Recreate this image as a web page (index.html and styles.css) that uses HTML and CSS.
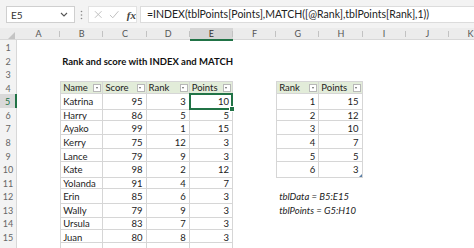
FILE: index.html
```html
<!DOCTYPE html>
<html lang="en">
<head>
  <meta charset="UTF-8" />
  <meta name="viewport" content="width=device-width, initial-scale=1.0"/>
  <title>Rank and score with INDEX and MATCH</title>
  <link rel="stylesheet" href="styles.css">
</head>
<body>
  <div class="toolbar">
    <div class="namebox">
      <span>E5</span>
      <svg width="8" height="5" viewBox="0 0 8 5"><path d="M1 1l3 3 3-3" fill="none" stroke="#555" stroke-width="1.1"/></svg>
    </div>
    <div class="grip">
      <svg width="3" height="10" viewBox="0 0 3 10"><circle cx="1.5" cy="1.5" r="0.8" fill="#888"/><circle cx="1.5" cy="5" r="0.8" fill="#888"/><circle cx="1.5" cy="8.5" r="0.8" fill="#888"/></svg>
    </div>
    <div class="fxgroup">
      <svg width="9" height="9" viewBox="0 0 9 9"><path d="M1 1l7 7M8 1l-7 7" stroke="#bdbdbd" stroke-width="1"/></svg>
      <svg width="11" height="9" viewBox="0 0 11 9"><path d="M1 5l3 3 6-7" fill="none" stroke="#bdbdbd" stroke-width="1"/></svg>
      <span class="fx">fx</span>
    </div>
    <div class="formula">=INDEX(tblPoints[Points],MATCH([@Rank],tblPoints[Rank],1))</div>
  </div>

  <div class="sheet">
    <div class="row colhead">
      <div class="corner"><svg width="7" height="7" viewBox="0 0 7 7"><path d="M7 0v7H0z" fill="#c4c4c4"/></svg></div>
      <div class="ch">A</div><div class="ch">B</div><div class="ch">C</div><div class="ch">D</div>
      <div class="ch active">E</div><div class="ch">F</div><div class="ch">G</div><div class="ch">H</div>
      <div class="ch">I</div><div class="ch">J</div><div class="ch">K</div>
    </div>

    <div class="row"><div class="rh">1</div></div>
    <div class="row"><div class="rh">2</div><div class="title">Rank and score with INDEX and MATCH</div></div>
    <div class="row"><div class="rh">3</div></div>
    <div class="row">
      <div class="rh">4</div>
      <div class="c hd first colb">Name<span class="fb"></span></div>
      <div class="c hd">Score<span class="fb"></span></div>
      <div class="c hd">Rank<span class="fb"></span></div>
      <div class="c hd">Points<span class="fb"></span></div>
      <div class="c hd first colg">Rank<span class="fb"></span></div>
      <div class="c hd">Points<span class="fb"></span></div>
    </div>
    <div class="row">
      <div class="rh on">5</div>
      <div class="c first colb">Katrina</div><div class="c n">95</div><div class="c n">3</div><div class="c n sel">10</div>
      <div class="c n first colg">1</div><div class="c n">15</div>
    </div>
    <div class="row">
      <div class="rh">6</div>
      <div class="c first colb">Harry</div><div class="c n">86</div><div class="c n">5</div><div class="c n">5</div>
      <div class="c n first colg">2</div><div class="c n">12</div>
    </div>
    <div class="row">
      <div class="rh">7</div>
      <div class="c first colb">Ayako</div><div class="c n">99</div><div class="c n">1</div><div class="c n">15</div>
      <div class="c n first colg">3</div><div class="c n">10</div>
    </div>
    <div class="row">
      <div class="rh">8</div>
      <div class="c first colb">Kerry</div><div class="c n">75</div><div class="c n">12</div><div class="c n">3</div>
      <div class="c n first colg">4</div><div class="c n">7</div>
    </div>
    <div class="row">
      <div class="rh">9</div>
      <div class="c first colb">Lance</div><div class="c n">79</div><div class="c n">9</div><div class="c n">3</div>
      <div class="c n first colg">5</div><div class="c n">5</div>
    </div>
    <div class="row">
      <div class="rh">10</div>
      <div class="c first colb">Kate</div><div class="c n">98</div><div class="c n">2</div><div class="c n">12</div>
      <div class="c n first colg">6</div><div class="c n resize">3</div>
    </div>
    <div class="row">
      <div class="rh">11</div>
      <div class="c first colb">Yolanda</div><div class="c n">91</div><div class="c n">4</div><div class="c n">7</div>
    </div>
    <div class="row">
      <div class="rh">12</div>
      <div class="c first colb">Erin</div><div class="c n">85</div><div class="c n">6</div><div class="c n">3</div>
      <div class="note">tblData = B5:E15</div>
    </div>
    <div class="row">
      <div class="rh">13</div>
      <div class="c first colb">Wally</div><div class="c n">79</div><div class="c n">9</div><div class="c n">3</div>
      <div class="note">tblPoints = G5:H10</div>
    </div>
    <div class="row">
      <div class="rh">14</div>
      <div class="c first colb">Ursula</div><div class="c n">83</div><div class="c n">7</div><div class="c n">3</div>
    </div>
    <div class="row">
      <div class="rh">15</div>
      <div class="c first colb">Juan</div><div class="c n">80</div><div class="c n">8</div><div class="c n">3</div>
    </div>
    <div class="row">
      <div class="rh"></div>
      <div class="c first colb"></div><div class="c"></div><div class="c"></div><div class="c"></div>
    </div>
  </div>
</body>
</html>
```

FILE: styles.css
```css
body {
  margin: 0;
  font-family: Lato, "Liberation Sans", sans-serif;
  color: #222;
  background-color: #fff;
  overflow: hidden;
}
.toolbar {
  height: 28px;
  background-color: #f3f3f3;
  display: flex;
  align-items: flex-start;
  padding: 6px 0 0 6px;
  box-sizing: border-box;
}
.namebox {
  width: 69px;
  height: 17px;
  box-sizing: border-box;
  background-color: #fff;
  border: 1px solid #cfcfcf;
  display: flex;
  align-items: center;
  justify-content: space-between;
  padding: 0 6px 0 4px;
  font-size: 10px;
  color: #333;
}
.grip {
  width: 13px;
  height: 17px;
  display: flex;
  align-items: center;
  justify-content: center;
}
.fxgroup {
  width: 49px;
  height: 17px;
  box-sizing: border-box;
  background-color: #fff;
  border: 1px solid #e2e2e2;
  display: flex;
  align-items: center;
  gap: 7px;
  padding-left: 5px;
}
.fx {
  font-family: "Liberation Serif", serif;
  font-style: italic;
  font-weight: bold;
  font-size: 11px;
  color: #444;
}
.formula {
  flex: 1;
  margin-left: 3px;
  height: 17px;
  box-sizing: border-box;
  background-color: #fff;
  border: 1px solid #dcdcdc;
  border-right: none;
  padding-left: 6px;
  font-size: 10.5px;
  line-height: 15px;
  color: #222;
  white-space: nowrap;
}
.row {
  display: grid;
  grid-template-columns: 17px repeat(11, 43.2px);
  height: 13.57px;
  font-size: 9.5px;
}
.colhead {
  height: 12px;
  background-color: #ececec;
  border-bottom: 1px solid #d8d8d8;
  box-sizing: border-box;
}
.corner {
  display: flex;
  align-items: flex-end;
  justify-content: flex-end;
  padding: 0 2px 2px 0;
}
.ch {
  position: relative;
  text-align: center;
  font-size: 9px;
  line-height: 11px;
  color: #555;
}
.ch::after {
  content: "";
  position: absolute;
  right: 0;
  top: 3px;
  height: 6px;
  border-right: 1px solid #c2c2c2;
}
.ch.active {
  background-color: #d6d6d6;
  color: #333;
  border-bottom: 2px solid #217346;
}
.rh {
  background-color: #f3f3f3;
  border-right: 1px solid #d8d8d8;
  text-align: center;
  line-height: 15px;
  font-size: 9px;
  color: #666;
  overflow: hidden;
}
.rh.on {
  background-color: #d9d9d9;
  color: #217346;
  border-right: 2px solid #217346;
}
.title {
  grid-column: 3 / span 5;
  padding-left: 2px;
  font-weight: bold;
  font-size: 9.5px;
  line-height: 15px;
  white-space: nowrap;
  color: #111;
}
.note {
  grid-column: 8 / span 3;
  padding-left: 3px;
  font-style: italic;
  line-height: 15px;
  white-space: nowrap;
}
.c {
  box-sizing: border-box;
  border-right: 1px solid #d6d6d6;
  border-bottom: 1px solid #d6d6d6;
  padding: 0 2px;
  line-height: 15px;
  white-space: nowrap;
  overflow: hidden;
}
.c.first {
  border-left: 1px solid #d6d6d6;
}
.colb {
  grid-column: 3;
}
.colg {
  grid-column: 8;
}
.n {
  text-align: right;
  padding-right: 3px;
}
.hd {
  background-color: #e2ecd9;
  border-top: 1px solid #d6d6d6;
  display: flex;
  align-items: center;
  justify-content: space-between;
  padding-top: 1px;
  padding-right: 1px;
}
.fb {
  width: 8px;
  height: 8px;
  box-sizing: border-box;
  background-color: #fff;
  border: 1px solid #b8b8b8;
  position: relative;
}
.fb::after {
  content: "";
  position: absolute;
  left: 1.5px;
  top: 2.5px;
  border-left: 1.5px solid transparent;
  border-right: 1.5px solid transparent;
  border-top: 2px solid #666;
}
.sel {
  position: relative;
  overflow: visible;
}
.sel::after {
  content: "";
  position: absolute;
  left: -1px;
  top: -1px;
  right: -1px;
  bottom: -1px;
  border: 2px solid #217346;
}
.sel::before {
  content: "";
  position: absolute;
  right: -3px;
  bottom: -3px;
  width: 4px;
  height: 4px;
  background-color: #217346;
  border: 1px solid #fff;
  z-index: 1;
}
.resize {
  position: relative;
  overflow: visible;
}
.resize::after {
  content: "";
  position: absolute;
  right: 0;
  bottom: 0;
  border-left: 3px solid transparent;
  border-bottom: 3px solid #5b7fa6;
}
```
